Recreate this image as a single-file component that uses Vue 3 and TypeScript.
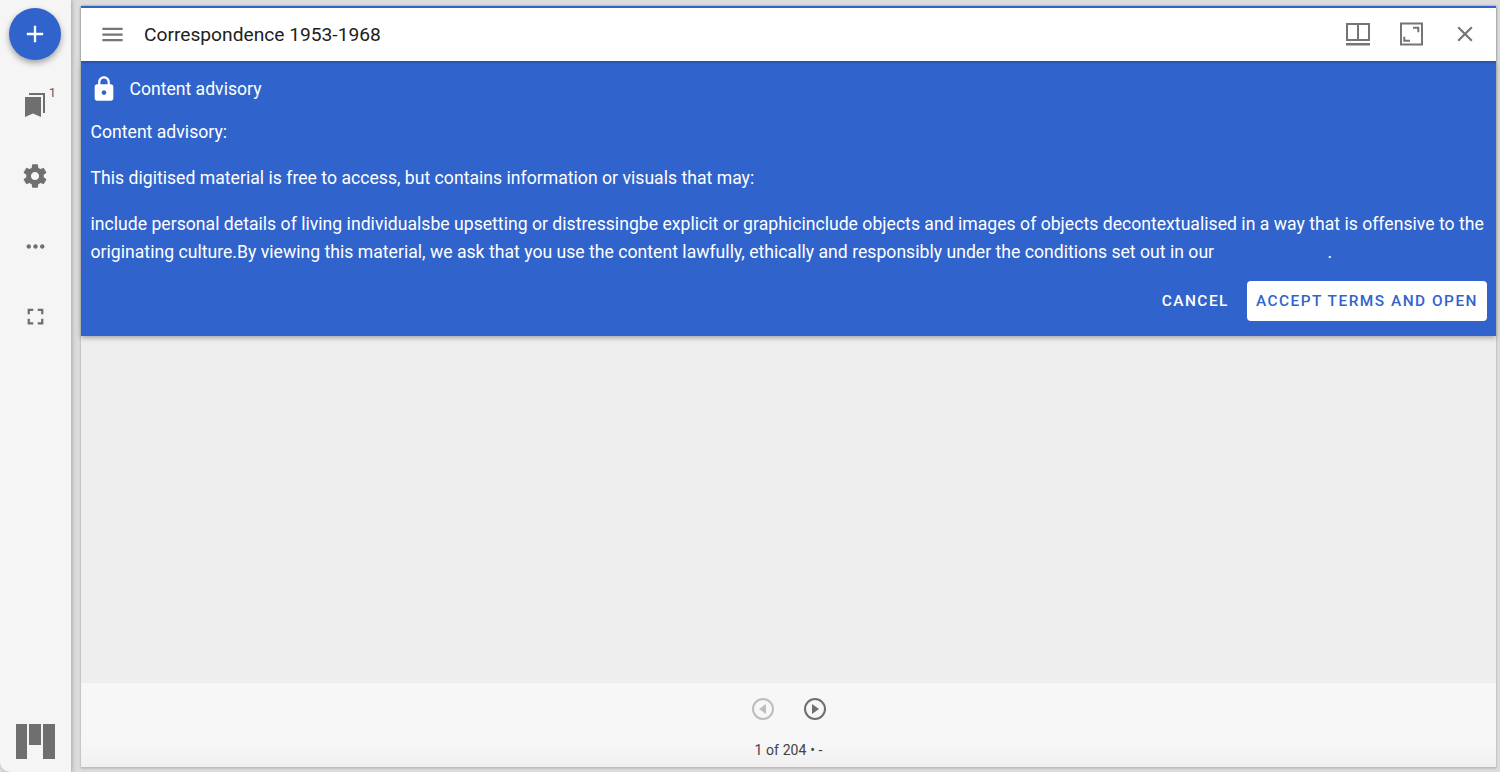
<script setup lang="ts">
const title = 'Correspondence 1953-1968'
const currentPage = 1
const totalPages = 204
</script>

<template>
  <div class="workspace">
    <aside class="sidebar">
      <button class="fab" aria-label="Add resource">
        <svg viewBox="0 0 24 24" width="28" height="28"><path d="M19 13h-6v6h-2v-6H5v-2h6V5h2v6h6v2z" /></svg>
      </button>
      <div class="side-items">
        <button class="side-btn" aria-label="List windows">
          <svg viewBox="0 0 28 28" width="28" height="28">
            <path d="M4 6h16v20l-8-3.5L4 26V6z" />
            <path d="M8 2h16v20h-2V4H8V2z" />
          </svg>
          <span class="count">1</span>
        </button>
        <button class="side-btn" aria-label="Settings">
          <svg viewBox="0 0 24 24" width="28" height="28">
            <path d="M19.43 12.98c.04-.32.07-.64.07-.98s-.03-.66-.07-.98l2.11-1.65c.19-.15.24-.42.12-.64l-2-3.46c-.12-.22-.39-.3-.61-.22l-2.49 1c-.52-.4-1.08-.73-1.69-.98l-.38-2.65C14.46 2.18 14.25 2 14 2h-4c-.25 0-.46.18-.49.42l-.38 2.65c-.61.25-1.17.59-1.69.98l-2.49-1c-.23-.09-.49 0-.61.22l-2 3.46c-.13.22-.07.49.12.64l2.11 1.65c-.04.32-.07.65-.07.98s.03.66.07.98l-2.11 1.65c-.19.15-.24.42-.12.64l2 3.46c.12.22.39.3.61.22l2.49-1c.52.4 1.08.73 1.69.98l.38 2.65c.03.24.24.42.49.42h4c.25 0 .46-.18.49-.42l.38-2.65c.61-.25 1.17-.59 1.69-.98l2.49 1c.23.09.49 0 .61-.22l2-3.46c.12-.22.07-.49-.12-.64l-2.11-1.65zM12 15.5c-1.93 0-3.5-1.57-3.5-3.5s1.57-3.5 3.5-3.5 3.5 1.57 3.5 3.5-1.57 3.5-3.5 3.5z" />
          </svg>
        </button>
        <button class="side-btn" aria-label="More">
          <svg viewBox="0 0 24 24" width="27" height="27">
            <path d="M6 10c-1.1 0-2 .9-2 2s.9 2 2 2 2-.9 2-2-.9-2-2-2zm12 0c-1.1 0-2 .9-2 2s.9 2 2 2 2-.9 2-2-.9-2-2-2zm-6 0c-1.1 0-2 .9-2 2s.9 2 2 2 2-.9 2-2-.9-2-2-2z" />
          </svg>
        </button>
        <button class="side-btn" aria-label="Full screen">
          <svg viewBox="0 0 24 24" width="27" height="27">
            <path d="M7 14H5v5h5v-2H7v-3zm-2-4h2V7h3V5H5v5zm12 7h-3v2h5v-5h-2v3zM14 5v2h3v3h2V5h-5z" />
          </svg>
        </button>
      </div>
      <svg class="logo" viewBox="0 0 39 35" width="39" height="35">
        <rect x="0" y="0" width="11" height="35" />
        <rect x="13" y="0" width="12" height="21" />
        <rect x="27" y="0" width="12" height="35" />
      </svg>
    </aside>

    <main class="window">
      <header class="topbar">
        <button class="icon-btn" aria-label="Toggle sidebar">
          <svg viewBox="0 0 24 24" width="27" height="27"><path d="M3 18h18v-2H3v2zm0-5h18v-2H3v2zm0-7v2h18V6H3z" /></svg>
        </button>
        <h1 class="title">{{ title }}</h1>
        <div class="top-actions">
          <button class="icon-btn" aria-label="Book view">
            <svg viewBox="0 0 26 24" width="26" height="24">
              <path d="M1 1h24v18H1V1zm2 2v14h9V3H3zm11 0v14h9V3h-9zM1 21h24v2.4H1V21z" fill-rule="evenodd" />
            </svg>
          </button>
          <button class="icon-btn" aria-label="Maximize window">
            <svg class="outline" viewBox="0 0 24 24" width="24" height="24">
              <rect x="2" y="1.5" width="21" height="21" />
              <path d="M14 5.7h5.3v4.6M5.3 14.7v4H11" />
            </svg>
          </button>
          <button class="icon-btn close-btn" aria-label="Close window">
            <svg viewBox="0 0 24 24" width="26" height="26"><path d="M19 6.41 17.59 5 12 10.59 6.41 5 5 6.41 10.59 12 5 17.59 6.41 19 12 13.41 17.59 19 19 17.59 13.41 12z" /></svg>
          </button>
        </div>
      </header>

      <section class="advisory">
        <div class="advisory-head">
          <svg viewBox="0 0 24 24" width="28" height="28">
            <path d="M18 8h-1V6c0-2.76-2.24-5-5-5S7 3.24 7 6v2H6c-1.1 0-2 .9-2 2v10c0 1.1.9 2 2 2h12c1.1 0 2-.9 2-2V10c0-1.1-.9-2-2-2zm-6 9c-1.1 0-2-.9-2-2s.9-2 2-2 2 .9 2 2-.9 2-2 2zm3.1-9H8.9V6c0-1.71 1.39-3.1 3.1-3.1 1.71 0 3.1 1.39 3.1 3.1v2z" />
          </svg>
          <span>Content advisory</span>
        </div>
        <div class="advisory-body">
          <p>Content advisory:</p>
          <p>This digitised material is free to access, but contains information or visuals that may:</p>
          <p>include personal details of living individualsbe upsetting or distressingbe explicit or graphicinclude objects and images of objects decontextualised in a way that is offensive to the originating culture.By viewing this material, we ask that you use the content lawfully, ethically and responsibly under the conditions set out in our <a class="terms" href="#" aria-label="Terms"></a>.</p>
        </div>
        <div class="advisory-actions">
          <button class="btn-cancel">Cancel</button>
          <button class="btn-accept">Accept terms and open</button>
        </div>
      </section>

      <div class="canvas"></div>

      <footer class="footer">
        <div class="pager">
          <button class="page-btn disabled" aria-label="Previous page">
            <svg viewBox="0 0 24 24" width="24" height="24">
              <path d="M12 1a11 11 0 1 0 0 22 11 11 0 0 0 0-22zm0 2a9 9 0 1 1 0 18 9 9 0 0 1 0-18z" />
              <path d="M15 7v10l-7-5z" />
            </svg>
          </button>
          <button class="page-btn" aria-label="Next page">
            <svg viewBox="0 0 24 24" width="24" height="24">
              <path d="M12 1a11 11 0 1 0 0 22 11 11 0 0 0 0-22zm0 2a9 9 0 1 1 0 18 9 9 0 0 1 0-18z" />
              <path d="M9 7v10l7-5z" />
            </svg>
          </button>
        </div>
        <div class="page-label">{{ currentPage }} of {{ totalPages }} • -</div>
      </footer>
    </main>
  </div>
</template>

<style>
html,
body {
  margin: 0;
  overflow: hidden;
}
</style>

<style scoped>
.workspace {
  display: flex;
  height: 772px;
  background: #dcdcdc;
  font-family: Roboto, "Liberation Sans", sans-serif;
  color: #212121;
}

button {
  border: 0;
  background: none;
  padding: 0;
  font-family: inherit;
  cursor: pointer;
}

.sidebar {
  display: flex;
  flex-direction: column;
  align-items: center;
  flex: 0 0 71px;
  box-sizing: border-box;
  height: 772px;
  padding: 8px 1px 13px 0;
  background: #f5f5f5;
  border-bottom-left-radius: 10px;
  box-shadow: 1px 0 4px rgba(0, 0, 0, 0.25);
}

.fab {
  display: flex;
  align-items: center;
  justify-content: center;
  width: 52px;
  height: 52px;
  border-radius: 50%;
  background: #3064cc;
  box-shadow: 0 3px 6px rgba(0, 0, 0, 0.35);
}

.fab svg {
  fill: #fff;
}

.side-items {
  display: flex;
  flex-direction: column;
  gap: 30.5px;
  align-items: center;
  margin-top: 25px;
  flex: 1;
}

.side-btn {
  position: relative;
  display: flex;
  align-items: center;
  justify-content: center;
  width: 40px;
  height: 40px;
}

.side-btn svg,
.logo {
  fill: #6f6f6f;
}

.count {
  position: absolute;
  top: 0;
  right: -1px;
  font-size: 13px;
  line-height: 15px;
  color: #616161;
}

.window {
  display: flex;
  flex-direction: column;
  flex: 1;
  min-width: 0;
  margin: 6px 4px 4px 10px;
  box-shadow: 0 0 2px rgba(0, 0, 0, 0.3);
}

.topbar {
  position: relative;
  z-index: 2;
  display: flex;
  align-items: center;
  flex: 0 0 55px;
  box-sizing: border-box;
  padding: 0 18px 1px 18px;
  background: #fff;
  border-top: 2px solid #3064cc;
  box-shadow: 0 1px 3px rgba(0, 0, 0, 0.3);
}

.icon-btn {
  display: flex;
  align-items: center;
  justify-content: center;
}

.icon-btn svg {
  fill: #757575;
}

.icon-btn svg.outline {
  fill: none;
  stroke: #757575;
  stroke-width: 2;
}

.title {
  margin: 0 0 0 18px;
  font-size: 19.2px;
  font-weight: 400;
  color: #212121;
}

.top-actions {
  display: flex;
  align-items: center;
  gap: 28px;
  margin-left: auto;
}

.close-btn {
  margin-left: 1px;
}

.advisory {
  position: relative;
  z-index: 1;
  flex: 0 0 275px;
  box-sizing: border-box;
  padding: 14px 9px 0 9.5px;
  background: #3064cc;
  color: #fff;
  box-shadow: 0 2px 5px rgba(0, 0, 0, 0.3);
}

.advisory-head {
  display: flex;
  align-items: center;
  gap: 11.5px;
  height: 28px;
  font-size: 17.6px;
}

.advisory-head svg {
  fill: #fff;
  flex: none;
  margin-left: -0.5px;
}

.advisory-body {
  margin-top: 15px;
  font-size: 17.6px;
  line-height: 28px;
  letter-spacing: 0.02px;
}

.advisory-body p {
  margin: 0 0 18px;
}

.terms {
  display: inline-block;
  width: 109px;
  height: 1em;
}

.advisory-actions {
  display: flex;
  align-items: center;
  justify-content: flex-end;
  gap: 9px;
  margin-top: -3px;
}

.btn-cancel,
.btn-accept {
  height: 40px;
  font-size: 15.4px;
  font-weight: 500;
  letter-spacing: 1.5px;
  text-transform: uppercase;
  border-radius: 4px;
}

.btn-cancel {
  padding: 0 9px;
  color: #fff;
}

.btn-accept {
  padding: 0 9px;
  background: #fff;
  color: #3064cc;
}

.canvas {
  flex: 1;
  background: #eeeeee;
}

.footer {
  flex: 0 0 85px;
  box-sizing: border-box;
  padding-top: 14px;
  background: linear-gradient(#f7f7f7 70%, #f0f0f0);
  text-align: center;
  border-bottom: 1px solid #bdbdbd;
}

.pager {
  display: flex;
  justify-content: center;
  gap: 28px;
  height: 24px;
}

.page-btn svg {
  fill: #6f6f6f;
}

.page-btn.disabled svg {
  fill: #bdbdbd;
}

.page-label {
  margin-top: 20px;
  font-size: 14px;
  line-height: 18px;
  letter-spacing: 0.1px;
  color: #424242;
}
</style>
